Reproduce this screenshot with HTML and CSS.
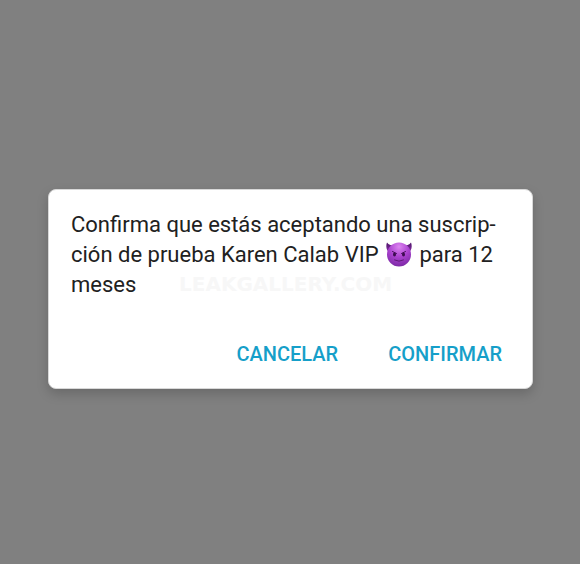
FILE: index.html
```html
<!DOCTYPE html>
<html lang="es">
<head>
<meta charset="utf-8">
<meta name="viewport" content="width=device-width, initial-scale=1">
<title>Confirmar suscripción</title>
<link rel="stylesheet" href="styles.css">
</head>
<body>
<main class="backdrop">
  <section class="dialog" role="alertdialog" aria-modal="true" aria-describedby="message">
    <p class="message" id="message">Confirma que estás aceptando una suscrip&shy;ción de prueba Karen Calab VIP <svg class="emoji" viewBox="0 0 52 52" aria-hidden="true">
      <defs>
        <radialGradient id="face" cx="50%" cy="18%" r="84%">
          <stop offset="0" stop-color="#dc86f0"/>
          <stop offset="0.5" stop-color="#ab42d0"/>
          <stop offset="1" stop-color="#7a28a3"/>
        </radialGradient>
        <linearGradient id="horn" x1="0" y1="0" x2="0" y2="1">
          <stop offset="0" stop-color="#4f1568"/>
          <stop offset="1" stop-color="#8a2fac"/>
        </linearGradient>
      </defs>
      <path fill="url(#horn)" d="M2 3C-1 11 1 19 7 23L18 9C11 9 5 8 2 3Z"/>
      <path fill="url(#horn)" d="M50 3C53 11 51 19 45 23L34 9C41 9 47 8 50 3Z"/>
      <circle cx="26" cy="27" r="24" fill="url(#face)"/>
      <path d="M13 21L21 25M39 21L31 25" fill="none" stroke="#4b115f" stroke-width="2" stroke-linecap="round"/>
      <ellipse cx="17" cy="27" rx="3" ry="4" fill="#3d0c50"/>
      <ellipse cx="35" cy="27" rx="3" ry="4" fill="#3d0c50"/>
      <path d="M17 38Q26 43 35 38" fill="none" stroke="#5f1a78" stroke-width="2" stroke-linecap="round"/>
    </svg> para 12 meses</p>
    <span class="watermark">LEAKGALLERY.COM</span>
    <div class="actions">
      <button class="action" type="button">CANCELAR</button>
      <button class="action" type="button">CONFIRMAR</button>
    </div>
  </section>
</main>
</body>
</html>
```
FILE: styles.css
```css
* {
  box-sizing: border-box;
}

body {
  margin: 0;
  background: #808080;
  color: #212121;
  font-family: Roboto, "Liberation Sans", sans-serif;
}

.backdrop {
  display: grid;
  align-items: center;
  min-height: 100vh;
  padding: 14px 47px 0 48px;
}

.dialog {
  position: relative;
  padding: 20px 22px 12px;
  border: 1px solid #d8d8d8;
  border-radius: 8px;
  background: #fff;
  box-shadow: 0 5px 12px rgba(0, 0, 0, 0.18);
}

.message {
  margin: 0;
  font-size: 22px;
  line-height: 30px;
  hyphens: manual;
}

.emoji {
  width: 26px;
  height: 26px;
  margin: 0 2px;
  vertical-align: -5px;
}

.watermark {
  position: absolute;
  top: 84px;
  left: 130px;
  color: #f7f7f7;
  font-family: "DejaVu Sans", sans-serif;
  font-size: 20px;
  font-weight: 700;
  line-height: 20px;
  pointer-events: none;
}

.actions {
  display: flex;
  justify-content: flex-end;
  gap: 34px;
  margin-top: 32px;
}

.action {
  height: 44px;
  padding: 0 8px;
  border: 0;
  background: transparent;
  color: #169fc9;
  font: 500 20px/24px Roboto, "Liberation Sans", sans-serif;
  cursor: pointer;
}
```
